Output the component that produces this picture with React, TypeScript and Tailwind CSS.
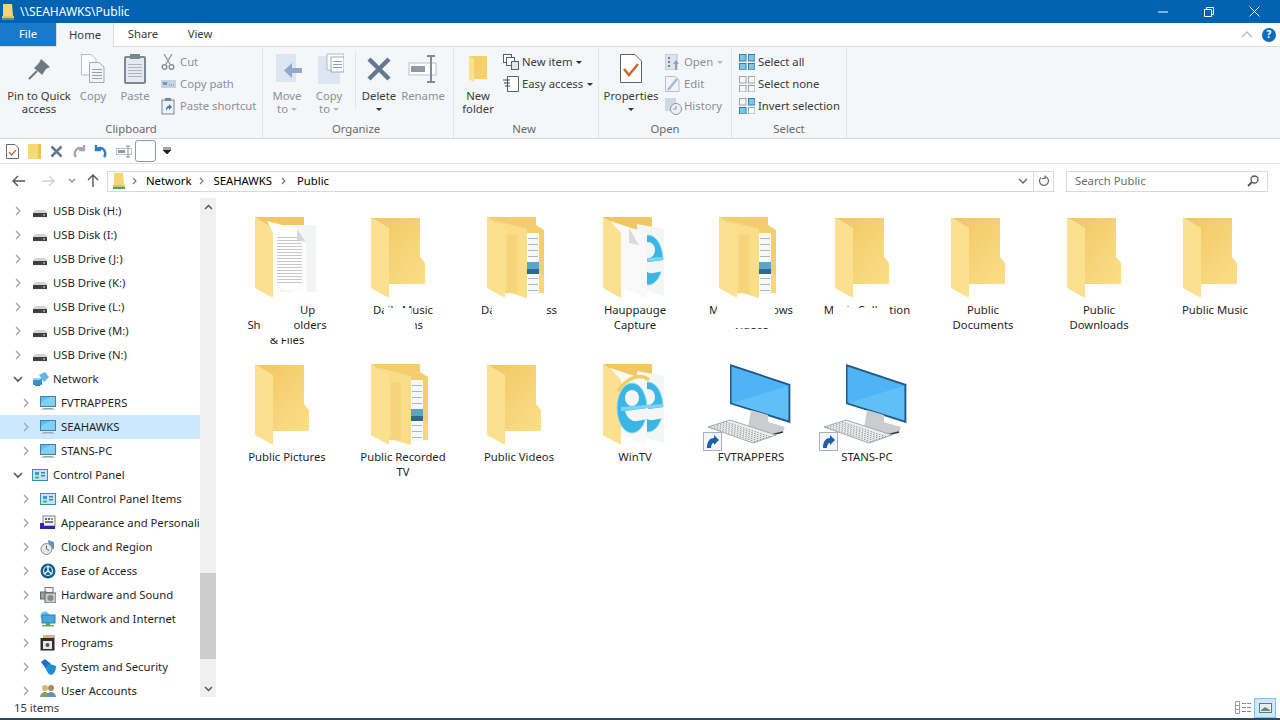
import type { ReactNode } from "react"

const FONT = "font-['Noto_Sans',sans-serif]"

// ---- small helpers for icons ----
function Ico({ w, h, children }: { w: number; h: number; children: ReactNode }) {
  return (
    <svg width={w} height={h} viewBox={`0 0 ${w} ${h}`} className="shrink-0">
      {children}
    </svg>
  )
}

function Chevron({ open }: { open?: boolean }) {
  return open ? (
    <svg width="12" height="12" viewBox="0 0 12 12" className="shrink-0">
      <path d="M2 4l4 4 4-4" fill="none" stroke="#555" strokeWidth="1.6" />
    </svg>
  ) : (
    <svg width="12" height="12" viewBox="0 0 12 12" className="shrink-0">
      <path d="M4 2l4 4-4 4" fill="none" stroke="#a6a6a6" strokeWidth="1.4" />
    </svg>
  )
}

// ---- tree icons ----
const DriveIcon = () => (
  <Ico w={16} h={16}>
    <path d="M3 7h10l2 3H1z" fill="#d4d4d4" />
    <rect x="1" y="10" width="14" height="4" fill="#3f3f3f" />
    <rect x="11" y="11.5" width="2" height="1" fill="#ddd" />
  </Ico>
)
const NetworkIcon = () => (
  <Ico w={18} h={16}>
    <rect x="1" y="7" width="9" height="7" fill="#3a8fd0" />
    <path d="M7 4l6-3 4 5-5 5z" fill="#5fb4e8" />
    <path d="M1 7h9l-2 2H1z" fill="#9ad2f2" />
    <rect x="3" y="14" width="5" height="1" fill="#666" />
  </Ico>
)
const PcIcon = () => (
  <Ico w={16} h={16}>
    <rect x="0.5" y="1.5" width="15" height="10" fill="#5dbdf0" stroke="#4a7fa5" />
    <path d="M1 7l9-5h5v9H1z" fill="#7fd0f7" />
    <rect x="3" y="13" width="10" height="1" fill="#9aa4ad" />
    <rect x="1" y="14" width="14" height="1" fill="#c4cad0" />
  </Ico>
)
const CpIcon = () => (
  <Ico w={16} h={16}>
    <rect x="0.5" y="2.5" width="15" height="11" fill="#bfe4f7" stroke="#3a8fb8" />
    <rect x="3" y="5" width="4" height="3" fill="#3d9bcb" />
    <rect x="9" y="5" width="4" height="1.5" fill="#4e7f99" />
    <rect x="9" y="8" width="4" height="1.5" fill="#4e7f99" />
    <rect x="3" y="9.5" width="4" height="2" fill="#63a86d" />
  </Ico>
)
const AppearanceIcon = () => (
  <Ico w={16} h={16}>
    <rect x="3" y="1" width="12" height="10" fill="#f4f4f4" stroke="#7b8794" />
    <rect x="5" y="3" width="2" height="2" fill="#b03a9a" />
    <rect x="8" y="3" width="2" height="2" fill="#3a6fd0" />
    <rect x="11" y="3" width="2" height="2" fill="#e08a2a" />
    <rect x="5" y="6" width="8" height="2" fill="#6c7a89" />
    <path d="M0 8h4v3h11v3H0z" fill="#3b1fa8" />
  </Ico>
)
const ClockIcon = () => (
  <Ico w={16} h={16}>
    <path d="M8 1l6 2v7l-5-1z" fill="#5f93c0" />
    <circle cx="6.5" cy="10" r="5.5" fill="#e9e9e9" stroke="#8b8b8b" />
    <path d="M6.5 6.5V10l2.5 1.5" fill="none" stroke="#666" />
  </Ico>
)
const EaseIcon = () => (
  <Ico w={16} h={16}>
    <circle cx="8" cy="8" r="7.5" fill="#13608f" />
    <circle cx="8" cy="8" r="4.5" fill="none" stroke="#d5ecf7" strokeWidth="1.2" />
    <path d="M8 2.5V8M8 8l4 3M8 8l-4 3" stroke="#fff" strokeWidth="1.4" fill="none" />
  </Ico>
)
const HardwareIcon = () => (
  <Ico w={16} h={16}>
    <rect x="5" y="0.5" width="8" height="5" fill="#f4f4f4" stroke="#777" />
    <rect x="0.5" y="5" width="6" height="7" fill="#9aa0a6" stroke="#666" />
    <rect x="5" y="6" width="11" height="10" fill="#c8cbce" stroke="#666" />
    <circle cx="10.5" cy="11" r="3" fill="#888" />
  </Ico>
)
const NetInternetIcon = () => (
  <Ico w={16} h={16}>
    <circle cx="5" cy="5" r="4.5" fill="#6ec4ea" />
    <rect x="2" y="4" width="13" height="8" fill="#45a9dd" stroke="#2f7fae" />
    <rect x="6" y="12" width="4" height="2" fill="#5aa25a" />
    <rect x="2" y="14" width="12" height="1.5" fill="#63aa63" />
  </Ico>
)
const ProgramsIcon = () => (
  <Ico w={16} h={16}>
    <path d="M3 0h12v3H3z" fill="#cdbb74" />
    <rect x="0.5" y="3" width="14" height="12.5" fill="#2e2e2e" />
    <rect x="3" y="6" width="9" height="8" fill="#e8e8e8" />
    <circle cx="7.5" cy="10" r="2" fill="#555" />
  </Ico>
)
const SecurityIcon = () => (
  <Ico w={16} h={16}>
    <path d="M1 3l4-3 6 5-5 5z" fill="#1f6fc2" />
    <path d="M6 9c0-3 2-4 4-4l6 2c0 5-2 8-5 9-3-1-5-4-5-7z" fill="#1c8fd0" />
  </Ico>
)
const UsersIcon = () => (
  <Ico w={16} h={16}>
    <circle cx="5" cy="5" r="3" fill="#d9b46f" />
    <path d="M0 15c0-4 2-6 5-6s4 2 4 6z" fill="#7ea36a" />
    <circle cx="11" cy="5" r="3" fill="#a98a5c" />
    <path d="M7 15c0-4 1-6 4-6s5 2 5 6z" fill="#6b8fb0" />
  </Ico>
)

type Row = { label: string; level: 1 | 2; icon: ReactNode; open?: boolean; active?: boolean }

const rows: Row[] = [
  { label: "USB Disk (H:)", level: 1, icon: <DriveIcon /> },
  { label: "USB Disk (I:)", level: 1, icon: <DriveIcon /> },
  { label: "USB Drive (J:)", level: 1, icon: <DriveIcon /> },
  { label: "USB Drive (K:)", level: 1, icon: <DriveIcon /> },
  { label: "USB Drive (L:)", level: 1, icon: <DriveIcon /> },
  { label: "USB Drive (M:)", level: 1, icon: <DriveIcon /> },
  { label: "USB Drive (N:)", level: 1, icon: <DriveIcon /> },
  { label: "Network", level: 1, icon: <NetworkIcon />, open: true },
  { label: "FVTRAPPERS", level: 2, icon: <PcIcon /> },
  { label: "SEAHAWKS", level: 2, icon: <PcIcon />, active: true },
  { label: "STANS-PC", level: 2, icon: <PcIcon /> },
  { label: "Control Panel", level: 1, icon: <CpIcon />, open: true },
  { label: "All Control Panel Items", level: 2, icon: <CpIcon /> },
  { label: "Appearance and Personalization", level: 2, icon: <AppearanceIcon /> },
  { label: "Clock and Region", level: 2, icon: <ClockIcon /> },
  { label: "Ease of Access", level: 2, icon: <EaseIcon /> },
  { label: "Hardware and Sound", level: 2, icon: <HardwareIcon /> },
  { label: "Network and Internet", level: 2, icon: <NetInternetIcon /> },
  { label: "Programs", level: 2, icon: <ProgramsIcon /> },
  { label: "System and Security", level: 2, icon: <SecurityIcon /> },
  { label: "User Accounts", level: 2, icon: <UsersIcon /> },
]

function TreeRow({ r }: { r: Row }) {
  return (
    <div className={`flex h-6 shrink-0 items-center whitespace-nowrap ${r.active ? "bg-[#cce8ff]" : ""} ${r.level === 1 ? "pl-3" : "pl-[20px]"}`}>
      <Chevron open={r.open} />
      <span className="ml-[8px] flex w-[21px] shrink-0 items-center">{r.icon}</span>
      <span className="text-[#1f1f1f]">{r.label}</span>
    </div>
  )
}

// ---- big file pane icons, all in a 96x90 box ----
function Back() {
  return <path d="M16 7H65V46L70 52V73H34V30z" fill="url(#fb)" />
}
function Flap() {
  return <path d="M16 6L34 17V87L16 77z" fill="#fbe08f" />
}
function Defs() {
  return (
    <defs>
      <linearGradient id="fb" x1="0" y1="0" x2="1" y2="1">
        <stop offset="0" stopColor="#f1c663" />
        <stop offset="1" stopColor="#fbde88" />
      </linearGradient>
    </defs>
  )
}

const PlainFolder = () => (
  <svg width="96" height="90" viewBox="0 0 96 90" className="overflow-visible">
    <Defs />
    <Back />
    <Flap />
  </svg>
)

const DocsFolder = () => (
  <svg width="96" height="90" viewBox="0 0 96 90" className="overflow-visible">
    <path d="M16 6H65V14L73 19V82H34z" fill="#f4cd6f" />
    <rect x="56" y="22" width="12" height="61" fill="#f7f8f8" />
    {[27, 33, 39, 45, 67, 73, 79].map(y => (
      <rect key={y} x="57" y={y} width="10" height="1" fill="#a9b8c2" />
    ))}
    <rect x="56" y="51" width="12" height="7" fill="#59a6cc" />
    <rect x="56" y="58" width="12" height="5" fill="#2f6a8c" />
    <path d="M68 60L73 66V82H68z" fill="#f8d879" />
    <path d="M25 10L56 18V87L32 80z" fill="#fadd88" />
    <rect x="36" y="24" width="10" height="58" fill="#f6d47a" />
    <Flap />
  </svg>
)

const TextFolder = () => (
  <svg width="96" height="90" viewBox="0 0 96 90" className="overflow-visible">
    <path d="M16 6H65V25H16z" fill="#f1c663" />
    <rect x="40" y="14" width="37" height="67" fill="#f3f4f4" />
    <Flap />
    <path d="M28 10L59 18L67 30L68 84L34 76V22z" fill="#fdfdfd" />
    {Array.from({ length: 16 }).map((_, i) => (
      <rect key={i} x="38" y={26 + i * 3} width="25" height="1" fill="#c4c8cb" />
    ))}
    <path d="M58 18L67 31L58 29z" fill="#d4d7da" />
  </svg>
)

// blue round mark of the browser, as a logo drawing
const IeMark = ({ cx, cy }: { cx: number; cy: number }) => (
  <g>
    <ellipse cx={cx} cy={cy} rx="15" ry="25" fill="#3bb6e4" stroke="#8bdcf5" />
    <ellipse cx={cx} cy={cy - 10} rx="7" ry="8" fill="#f4f5f5" />
    <path d={`M${cx - 7} ${cy + 3}L${cx + 16} ${cy}V${cy + 11}L${cx + 5} ${cy + 13}C${cx} ${cy + 14} ${cx - 5} ${cy + 10} ${cx - 7} ${cy + 3}z`} fill="#f4f5f5" />
    <path d={`M${cx - 11} ${cy - 1}L${cx + 14} ${cy - 3}V${cy}L${cx - 11} ${cy + 3}z`} fill="#7ed4f0" />
  </g>
)

const IeFolder = ({ full }: { full?: boolean }) => (
  <svg width="96" height="90" viewBox="0 0 96 90" className="overflow-visible">
    <path d="M16 6H65V25H16z" fill="#f1c663" />
    <path d="M50 13L77 18V85L50 78z" fill="#f4f5f5" />
    <IeMark cx={61} cy={49} />
    <Flap />
    <path d="M23 10L60 22V88L34 76V22z" fill="#f9f9f9" />
    {full ? (
      <>
        <IeMark cx={45} cy={50} />
        <path d="M31 33C40 19 54 15 62 22" fill="none" stroke="#f2cd5f" strokeWidth="3.5" />
      </>
    ) : (
      <path d="M42 17L52 34L42 32z" fill="#d8dadc" />
    )}
  </svg>
)

const ComputerIcon = () => (
  <svg width="96" height="90" viewBox="0 0 96 90" className="overflow-visible">
    <path d="M27 6L87 26V65L27 46z" fill="#1f5b85" />
    <path d="M28.5 8.5L85.5 27.5V62.5L28.5 44.5z" fill="#4fb3f5" />
    <path d="M29 45L85 28V62z" fill="#69c4f9" opacity="0.7" />
    <path d="M87 26l1-1v40l-1 1z" fill="#b7c0c6" />
    <path d="M48 52L65 57V64L82 69L80 74L64 78L45 70z" fill="#c9cdd0" />
    <path d="M45 70L64 78L80 74" fill="none" stroke="#333" strokeWidth="1.5" />
    <path d="M5 69L27 62L73 77L50 85z" fill="#eceded" stroke="#a3a8ac" />
    {[0, 1, 2, 3, 4, 5].map(i => (
      <path key={i} d={`M${8 + i * 3} ${69 - i}L${53 + i * 3} ${84 - i}`} stroke="#8f9499" strokeDasharray="1.5 1.5" />
    ))}
    <rect x="0.5" y="74.5" width="18" height="18" fill="#f3f5f8" stroke="#aab3bd" />
    <path d="M4 90C4 83 7 80 11 80V77L16 82L11 87V85C9 85 8 87 8 90z" fill="#1d5fa5" />
  </svg>
)

type Tile = { label: string; icon: ReactNode; cover?: ReactNode }

// white smears that sit over the labels in the first row
const Patch = ({ className }: { className: string }) => <div className={`absolute bg-white ${className}`} />

const tiles: Tile[] = [
  {
    label: "Backed Up\nShared Folders\n& Files",
    icon: <TextFolder />,
    cover: (
      <>
        <Patch className="left-[20px] top-[91px] h-[15px] w-[49px]" />
        <Patch className="left-[32px] top-[106px] h-[15px] w-[33px]" />
        <Patch className="left-[30px] top-[121px] h-[6px] w-[60px]" />
      </>
    ),
  },
  {
    label: "Daily Music\nAlbums",
    icon: <PlainFolder />,
    cover: (
      <>
        <Patch className="left-[39px] top-[97px] h-[10px] w-[27px]" />
        <Patch className="left-[20px] top-[106px] h-[15px] w-[50px]" />
      </>
    ),
  },
  {
    label: "Daily Business",
    icon: <DocsFolder />,
    cover: <Patch className="left-[31px] top-[91px] h-[16px] w-[54px]" />,
  },
  { label: "Hauppauge Capture", icon: <IeFolder /> },
  {
    label: "Media Windows\nVideos",
    icon: <DocsFolder />,
    cover: (
      <>
        <Patch className="left-[24px] top-[91px] h-[16px] w-[58px]" />
        <Patch className="left-[20px] top-[106px] h-[11px] w-[76px]" />
      </>
    ),
  },
  {
    label: "Music Collection",
    icon: <PlainFolder />,
    cover: <Patch className="left-[24px] top-[97px] h-[10px] w-[56px]" />,
  },
  { label: "Public Documents", icon: <PlainFolder /> },
  { label: "Public Downloads", icon: <PlainFolder /> },
  { label: "Public Music", icon: <PlainFolder /> },
  { label: "Public Pictures", icon: <PlainFolder /> },
  { label: "Public Recorded TV", icon: <DocsFolder /> },
  { label: "Public Videos", icon: <PlainFolder /> },
  { label: "WinTV", icon: <IeFolder full /> },
  { label: "FVTRAPPERS", icon: <ComputerIcon /> },
  { label: "STANS-PC", icon: <ComputerIcon /> },
]

function FileTile({ t }: { t: Tile }) {
  return (
    <div className="relative flex h-[147px] w-[116px] flex-col items-center">
      <div className="h-[90px] w-[96px]">{t.icon}</div>
      <div className="mt-[1px] w-[90px] whitespace-pre-line text-center leading-[15px] text-[#1f1f1f]">{t.label}</div>
      {t.cover}
    </div>
  )
}

// ---- ribbon ----
function Big({ icon, label, off, className = "" }: { icon: ReactNode; label: ReactNode; off?: boolean; className?: string }) {
  return (
    <div className={`flex shrink-0 flex-col items-center text-center leading-[13px] ${off ? "text-[#8b9097]" : "text-[#3a3a3a]"} ${className}`}>
      <div className="flex h-[36px] items-center justify-center">{icon}</div>
      <div className="mt-[2px]">{label}</div>
    </div>
  )
}

function Small({ icon, label, off, caret }: { icon: ReactNode; label: string; off?: boolean; caret?: boolean }) {
  return (
    <div className={`flex h-[22px] items-center whitespace-nowrap ${off ? "text-[#8b9097]" : "text-[#3a3a3a]"}`}>
      <span className="flex w-[19px] shrink-0 items-center">{icon}</span>
      {label}
      {caret && <span className={`ml-[4px] h-0 w-0 border-x-[3px] border-t-[3px] border-x-transparent ${off ? "border-t-[#b5b9be]" : "border-t-[#333]"}`} />}
    </div>
  )
}

function Group({ label, className, labelClass = "", children }: { label: string; className: string; labelClass?: string; children: ReactNode }) {
  return (
    <div className={`flex h-full shrink-0 flex-col border-r border-[#e1e3e6] ${className}`}>
      <div className="flex h-[74px] items-start pt-[4px]">{children}</div>
      <div className={`text-center leading-[15px] text-[#6a6a6a] ${labelClass}`}>{label}</div>
    </div>
  )
}

const Caret = ({ off }: { off?: boolean }) => (
  <span className={`inline-block h-0 w-0 border-x-[3px] border-t-[3px] border-x-transparent align-middle ${off ? "border-t-[#b5b9be]" : "border-t-[#333]"}`} />
)

const PinIcon = () => (
  <Ico w={24} h={24}>
    <path d="M14 2L23 10L19 12L15 18L13 16L7 11L12 6z" fill="#6d7885" />
    <path d="M10 14L2 22" stroke="#6d7885" strokeWidth="2" />
  </Ico>
)
const CopyIcon = () => (
  <Ico w={26} h={30}>
    <path d="M1.5 0.5H11L16 5V21H1.5z" fill="#fbfcfd" stroke="#b7bec6" />
    <path d="M9.5 8.5H19L24 13V28.5H9.5z" fill="#f2f5f8" stroke="#9faab5" />
    {[15, 18, 21, 24].map(y => (
      <rect key={y} x="12" y={y} width="10" height="1" fill="#8ea0b2" />
    ))}
  </Ico>
)
const PasteIcon = () => (
  <Ico w={22} h={30}>
    <rect x="1" y="3" width="20" height="26" rx="1" fill="#e6eaf0" stroke="#7a8896" strokeWidth="2" />
    <rect x="6" y="0" width="10" height="5" fill="#7a8896" />
    {[10, 13, 16, 19, 22].map(y => (
      <rect key={y} x="4" y={y} width="14" height="1" fill="#a9b6c4" />
    ))}
  </Ico>
)
const CutIcon = () => (
  <Ico w={14} h={16}>
    <path d="M3 0L9 10M11 0L5 10" stroke="#8a96a3" strokeWidth="1.3" />
    <circle cx="3.5" cy="13" r="2.3" fill="none" stroke="#7a8896" strokeWidth="1.3" />
    <circle cx="10.5" cy="13" r="2.3" fill="none" stroke="#7a8896" strokeWidth="1.3" />
  </Ico>
)
const CopyPathIcon = () => (
  <Ico w={15} h={10}>
    <rect x="0" y="1" width="15" height="8" fill="#c3d3e4" />
    <path d="M2 3l1 3 1-3 1 3 1-3M8 6h1M10 6h1M12 6h1" stroke="#5f7a96" fill="none" strokeWidth="0.8" />
  </Ico>
)
const PasteShortIcon = () => (
  <Ico w={14} h={17}>
    <rect x="1" y="2" width="12" height="14" fill="#eef2f6" stroke="#7a8896" />
    <rect x="4" y="0" width="6" height="3" fill="#7a8896" />
    <path d="M5 13c0-4 1-5 3-5V6l3 3-3 3v-2c-1 0-2 1-3 3z" fill="#3f78b3" />
  </Ico>
)
const MoveIcon = () => (
  <Ico w={30} h={32}>
    <rect x="4" y="1" width="20" height="28" fill="#dbe6f2" />
    <path d="M30 15H20V10L12 17.5L20 25V20H30z" fill="#8fa9c6" />
  </Ico>
)
const CopyToIcon = () => (
  <Ico w={30} h={32}>
    <rect x="4" y="3" width="22" height="28" fill="#dbe6f2" />
    <path d="M13 1H30V17H13z" fill="#fbfcfd" stroke="#b2bac3" />
    <path d="M17 4H30V19H17z" fill="#fdfdfe" stroke="#9faab5" />
    {[8, 11, 14].map(y => (
      <rect key={y} x="19" y={y} width="9" height="1" fill="#8ea0b2" />
    ))}
  </Ico>
)
const DeleteIcon = () => (
  <Ico w={26} h={26}>
    <path d="M3 3L23 23M23 3L3 23" stroke="#65788f" strokeWidth="4.5" />
  </Ico>
)
const RenameIcon = () => (
  <Ico w={30} h={28}>
    <rect x="1" y="8" width="27" height="12" fill="#fff" stroke="#b6c0ca" />
    <rect x="3" y="11" width="14" height="6" fill="#8a9aac" />
    <path d="M19 1H27M23 1V27M19 27H27" stroke="#7f8b98" strokeWidth="2" fill="none" />
  </Ico>
)
const NewFolderIcon = () => (
  <Ico w={20} h={28}>
    <path d="M1 1H19V24H6V27L1 24z" fill="#f5cf6c" />
    <path d="M1 1L6 4V27L1 24z" fill="#fbe08e" />
  </Ico>
)
const NewItemIcon = () => (
  <Ico w={16} h={16}>
    <rect x="0.5" y="0.5" width="8" height="8" fill="#fff" stroke="#55606b" />
    <rect x="3.5" y="3.5" width="8" height="8" fill="#fff" stroke="#55606b" />
    <rect x="8.5" y="7.5" width="7" height="8" fill="#dfe6ec" stroke="#55606b" />
  </Ico>
)
const EasyIcon = () => (
  <Ico w={16} h={16}>
    <path d="M4.5 0.5H15.5V15.5H4.5z" fill="#fff" stroke="#55606b" />
    <path d="M0 4H7M1 7H7M2 10H7" stroke="#33495f" />
  </Ico>
)
const PropsIcon = () => (
  <Ico w={22} h={30}>
    <path d="M0.5 0.5H15L21.5 7V28.5H0.5z" fill="#fff" stroke="#5b6168" />
    <path d="M4 15L9 21L18 10" fill="none" stroke="#cc6a38" strokeWidth="2.6" />
  </Ico>
)
const OpenIcon = () => (
  <Ico w={14} h={16}>
    <rect x="0" y="0" width="12" height="16" fill="#dbe3ec" stroke="#b3bfcb" />
    <path d="M3 3h2v2H3zM3 7h2v2H3zM3 11h2v2H3z" fill="#6f8296" />
    <path d="M11 6l3 4h-2v6h-2v-6H8z" fill="#8ea2b7" />
  </Ico>
)
const EditIcon = () => (
  <Ico w={15} h={16}>
    <path d="M0.5 0.5H10L14 4V15.5H0.5z" fill="#f0f4f8" stroke="#b3bfcb" />
    <path d="M12 3L3 14" stroke="#a5bad0" strokeWidth="2.5" />
  </Ico>
)
const HistoryIcon = () => (
  <Ico w={17} h={17}>
    <rect x="0" y="0" width="11" height="13" fill="#cdd9e6" />
    <circle cx="11" cy="11" r="5.5" fill="#eef1f4" stroke="#8a96a3" />
    <path d="M11 8v3h-3" fill="none" stroke="#8a96a3" />
  </Ico>
)
const Grid2 = ({ on }: { on: number[] }) => (
  <Ico w={16} h={16}>
    {[0, 1, 2, 3].map(i => (
      <rect
        key={i}
        x={(i % 2) * 9 + 0.5}
        y={Math.floor(i / 2) * 9 + 0.5}
        width="6.5"
        height="6.5"
        fill={on.includes(i) ? "#7cc4e8" : "#f5f6f7"}
        stroke={on.includes(i) ? "#2d7fb5" : "#9aa4ad"}
      />
    ))}
  </Ico>
)

function Ribbon() {
  return (
    <div className="flex h-[92px] shrink-0 border-b border-[#dadbdc] bg-[#f5f6f7]">
      <Group label="Clipboard" className="w-[263px]">
        <div className="w-1 shrink-0" />
        <Big className="w-[70px]" icon={<PinIcon />} label={<>Pin to Quick<br />access</>} />
        <Big className="w-[38px]" icon={<CopyIcon />} label="Copy" off />
        <Big className="w-[46px]" icon={<PasteIcon />} label="Paste" off />
        <div className="ml-[3px] flex flex-col">
          <Small icon={<CutIcon />} label="Cut" off />
          <Small icon={<CopyPathIcon />} label="Copy path" off />
          <Small icon={<PasteShortIcon />} label="Paste shortcut" off />
        </div>
      </Group>
      <Group label="Organize" className="w-[191px]" labelClass="pr-1">
        <div className="w-1 shrink-0" />
        <Big className="w-[40px]" icon={<MoveIcon />} label={<>Move<br />to <Caret off /></>} off />
        <div className="w-[2px] shrink-0" />
        <Big className="w-[40px]" icon={<CopyToIcon />} label={<>Copy<br />to <Caret off /></>} off />
        <div className="ml-[6px] mr-[4px] mt-[1px] h-[56px] w-px shrink-0 bg-[#e1e3e6]" />
        <Big className="w-[38px]" icon={<DeleteIcon />} label={<>Delete<br /><Caret /></>} />
        <Big className="w-[50px]" icon={<RenameIcon />} label="Rename" off />
      </Group>
      <Group label="New" className="w-[145px]" labelClass="pr-1">
        <div className="w-1 shrink-0" />
        <Big className="w-[40px]" icon={<NewFolderIcon />} label={<>New<br />folder</>} />
        <div className="ml-[5px] flex flex-col">
          <Small icon={<NewItemIcon />} label="New item" caret />
          <Small icon={<EasyIcon />} label="Easy access" caret />
        </div>
      </Group>
      <Group label="Open" className="w-[133px]">
        <div className="w-1 shrink-0" />
        <Big className="w-[56px]" icon={<PropsIcon />} label={<>Properties<br /><Caret /></>} />
        <div className="ml-[6px] flex flex-col">
          <Small icon={<OpenIcon />} label="Open" off caret />
          <Small icon={<EditIcon />} label="Edit" off />
          <Small icon={<HistoryIcon />} label="History" off />
        </div>
      </Group>
      <Group label="Select" className="w-[115px]">
        <div className="ml-[7px] flex flex-col">
          <Small icon={<Grid2 on={[0, 1, 2, 3]} />} label="Select all" />
          <Small icon={<Grid2 on={[]} />} label="Select none" />
          <Small icon={<Grid2 on={[1, 2]} />} label="Invert selection" />
        </div>
      </Group>
    </div>
  )
}

const ShareIcon = () => (
  <Ico w={12} h={18}>
    <path d="M1 1H10L11 13H1z" fill="#f6d56f" />
    <rect x="0" y="13" width="12" height="2" fill="#d9c27a" />
    <rect x="0" y="15" width="12" height="2" fill="#4aa84a" />
  </Ico>
)

function Sep({ className }: { className: string }) {
  return (
    <svg width="6" height="8" viewBox="0 0 6 8" className={className}>
      <path d="M1 1L4 4L1 7" fill="none" stroke="#777" strokeWidth="1.2" />
    </svg>
  )
}

export default function App() {
  return (
    <div className={`${FONT} flex h-[720px] w-[1280px] flex-col overflow-hidden bg-white text-[11.3px]`}>
      {/* title bar */}
      <div className="flex h-[23px] shrink-0 items-center bg-[#0063b1] text-white">
        <span className="ml-[2px] flex w-[18px]"><ShareIcon /></span>
        <span className="text-[12px]">\\SEAHAWKS\Public</span>
        <div className="ml-auto flex items-center">
          <svg width="10" height="10" viewBox="0 0 10 10" className="mr-[36px]"><path d="M0 5H10" stroke="#fff" /></svg>
          <svg width="10" height="10" viewBox="0 0 10 10" className="mr-[35px]"><path d="M2.5 2.5V.5H9.5V7.5H7.5M.5 2.5H7.5V9.5H.5z" fill="none" stroke="#fff" /></svg>
          <svg width="11" height="11" viewBox="0 0 11 11" className="mr-[20px]"><path d="M.5.5L10.5 10.5M10.5.5L.5 10.5" stroke="#fff" /></svg>
        </div>
      </div>
      {/* tabs */}
      <div className="flex h-[24px] shrink-0 items-stretch border-b border-[#dadbdc] bg-white">
        <div className="flex w-[56px] items-center justify-center bg-[#1979ca] text-white">File</div>
        <div className="mb-[-1px] flex w-[58px] items-center justify-center border-x border-[#dadbdc] bg-[#f5f6f7] text-[#3a3a3a]">Home</div>
        <div className="flex w-[58px] items-center justify-center text-[#3a3a3a]">Share</div>
        <div className="flex w-[56px] items-center justify-center text-[#3a3a3a]">View</div>
        <div className="ml-auto flex items-center">
          <svg width="12" height="7" viewBox="0 0 12 7" className="mr-[9px]"><path d="M1 6L6 1L11 6" fill="none" stroke="#b5b5b5" strokeWidth="1.3" /></svg>
          <div className="mr-[4px] flex h-[14px] w-[14px] items-center justify-center rounded-full bg-[#0f6cbd] text-[10px] font-bold text-white">?</div>
        </div>
      </div>
      <Ribbon />
      {/* quick access */}
      <div className="flex h-[25px] shrink-0 items-center border-b border-[#e3e3e3] pl-[6px]">
        <span className="flex w-[22px]">
          <Ico w={13} h={15}><path d="M.5.5H9L12.5 4V14.5H.5z" fill="#fff" stroke="#6a6a6a" /><path d="M3 8L5.5 11L10 6" fill="none" stroke="#d0603a" strokeWidth="1.2" /></Ico>
        </span>
        <span className="flex w-[22px]">
          <Ico w={13} h={15}><rect width="13" height="15" fill="#f8d775" /><rect x="10" width="3" height="15" fill="#e9c25f" /></Ico>
        </span>
        <span className="flex w-[22px]">
          <Ico w={13} h={13}><path d="M1.5 1.5L11.5 11.5M11.5 1.5L1.5 11.5" stroke="#65788f" strokeWidth="2.6" /></Ico>
        </span>
        <span className="flex w-[22px]">
          <Ico w={14} h={14}><path d="M12 1V6H7M11 5C8 3 4 4 3 8C2.5 10 3 12 4 13" fill="none" stroke="#a4a9ae" strokeWidth="2.4" /></Ico>
        </span>
        <span className="flex w-[22px]">
          <Ico w={14} h={14}><path d="M2 1V6H7M3 5C6 3 10 4 11 8C11.5 10 11 12 10 13" fill="none" stroke="#2a7cc7" strokeWidth="2.4" /></Ico>
        </span>
        <span className="flex w-[16px]">
          <Ico w={16} h={13}><rect x=".5" y="3.5" width="15" height="6" fill="#fff" stroke="#b6c0ca" /><rect x="2" y="5" width="7" height="3" fill="#8a9aac" /><path d="M10 1H14M12 1V12M10 12H14" stroke="#7f8b98" fill="none" /></Ico>
        </span>
        <div className="ml-[3px] h-[22px] w-[21px] rounded-[3px] border border-[#8a97a6] bg-white" />
        <svg width="8" height="8" viewBox="0 0 8 8" className="ml-[7px]"><path d="M0 1H8M0 3L4 7L8 3z" stroke="#222" fill="#222" strokeWidth=".8" /></svg>
      </div>
      {/* address row */}
      <div className="flex h-[34px] shrink-0 items-center">
        <svg width="14" height="12" viewBox="0 0 14 12" className="ml-[12px]"><path d="M13 6H1M6 1L1 6L6 11" fill="none" stroke="#555" strokeWidth="1.4" /></svg>
        <svg width="14" height="12" viewBox="0 0 14 12" className="ml-[15px]"><path d="M1 6H13M8 1L13 6L8 11" fill="none" stroke="#d0d0d0" strokeWidth="1.4" /></svg>
        <svg width="8" height="6" viewBox="0 0 8 6" className="ml-[13px]"><path d="M1 1L4 4L7 1" fill="none" stroke="#8a8a8a" strokeWidth="1.2" /></svg>
        <svg width="12" height="14" viewBox="0 0 12 14" className="ml-[11px]"><path d="M6 13V1M1 6L6 1L11 6" fill="none" stroke="#555" strokeWidth="1.4" /></svg>
        <div className="ml-[8px] flex h-[21px] w-[947px] items-center border border-[#d9d9d9]">
          <span className="ml-[5px] flex w-[12px]"><ShareIcon /></span>
          <Sep className="ml-[7px]" />
          <span className="ml-[8px]">Network</span>
          <Sep className="ml-[8px]" />
          <span className="ml-[8px]">SEAHAWKS</span>
          <Sep className="ml-[9px]" />
          <span className="ml-[10px]">Public</span>
          <svg width="10" height="6" viewBox="0 0 10 6" className="ml-auto mr-[5px]"><path d="M1 1L5 5L9 1" fill="none" stroke="#666" strokeWidth="1.4" /></svg>
          <div className="flex h-full w-[20px] items-center justify-center border-l border-[#d9d9d9]">
            <svg width="11" height="12" viewBox="0 0 11 12"><path d="M7 1.5A4.5 4.5 0 1 1 3 2.5M7 .5V3.5H4" fill="none" stroke="#666" strokeWidth="1.2" /></svg>
          </div>
        </div>
        <div className="ml-[12px] flex h-[21px] w-[202px] items-center border border-[#d9d9d9] pl-2 pr-[8px] text-[#6d6d6d]">
          Search Public
          <svg width="12" height="12" viewBox="0 0 12 12" className="ml-auto"><circle cx="7.5" cy="4.5" r="3.5" fill="none" stroke="#555" strokeWidth="1.3" /><path d="M5 7L1 11" stroke="#555" strokeWidth="1.8" /></svg>
        </div>
      </div>
      {/* main */}
      <div className="flex min-h-0 flex-1">
        <div className="flex w-[200px] shrink-0 flex-col overflow-hidden pt-px">
          {rows.map(r => <TreeRow key={r.label} r={r} />)}
        </div>
        <div className="flex w-[16px] shrink-0 flex-col bg-[#f0f0f0]">
          <div className="flex h-[17px] shrink-0 items-center justify-center">
            <svg width="9" height="6" viewBox="0 0 9 6"><path d="M1 5L4.5 1.5L8 5" fill="none" stroke="#555" strokeWidth="1.5" /></svg>
          </div>
          <div className="h-[358px] shrink-0" />
          <div className="h-[86px] shrink-0 bg-[#cdcdcd]" />
          <div className="mt-auto flex h-[17px] shrink-0 items-center justify-center">
            <svg width="9" height="6" viewBox="0 0 9 6"><path d="M1 1L4.5 4.5L8 1" fill="none" stroke="#555" strokeWidth="1.5" /></svg>
          </div>
        </div>
        <div className="grid flex-1 grid-cols-[repeat(9,116px)] content-start pl-[13px] pt-[13px]">
          {tiles.map(t => <FileTile key={t.label} t={t} />)}
        </div>
      </div>
      {/* status */}
      <div className="flex h-[21px] shrink-0 items-center pl-[14px] text-[#3a3a3a]">
        <span className="pt-px">15 items</span>
        <div className="ml-auto mr-[4px] flex items-center gap-[2px]">
          <svg width="17" height="14" viewBox="0 0 17 14"><path d="M.5.5h4v4h-4zM.5 4.5h4v4h-4zM.5 8.5h4v4h-4z" fill="#fff" stroke="#9a9a9a" /><path d="M7 2.5h9M7 6.5h9M7 10.5h9" stroke="#7a8896" strokeDasharray="4 1" /></svg>
          <div className="flex h-[20px] w-[22px] items-center justify-center border border-[#7fc3f0] bg-[#cce8ff]">
            <svg width="13" height="10" viewBox="0 0 13 10"><rect x=".5" y=".5" width="12" height="9" fill="#e8eef0" stroke="#5f7a80" /><path d="M2 7L6 4L11 7V8H2z" fill="#6b8a72" /></svg>
          </div>
        </div>
      </div>
      <div className="h-[2px] shrink-0 bg-[#2f4858]" />
    </div>
  )
}
